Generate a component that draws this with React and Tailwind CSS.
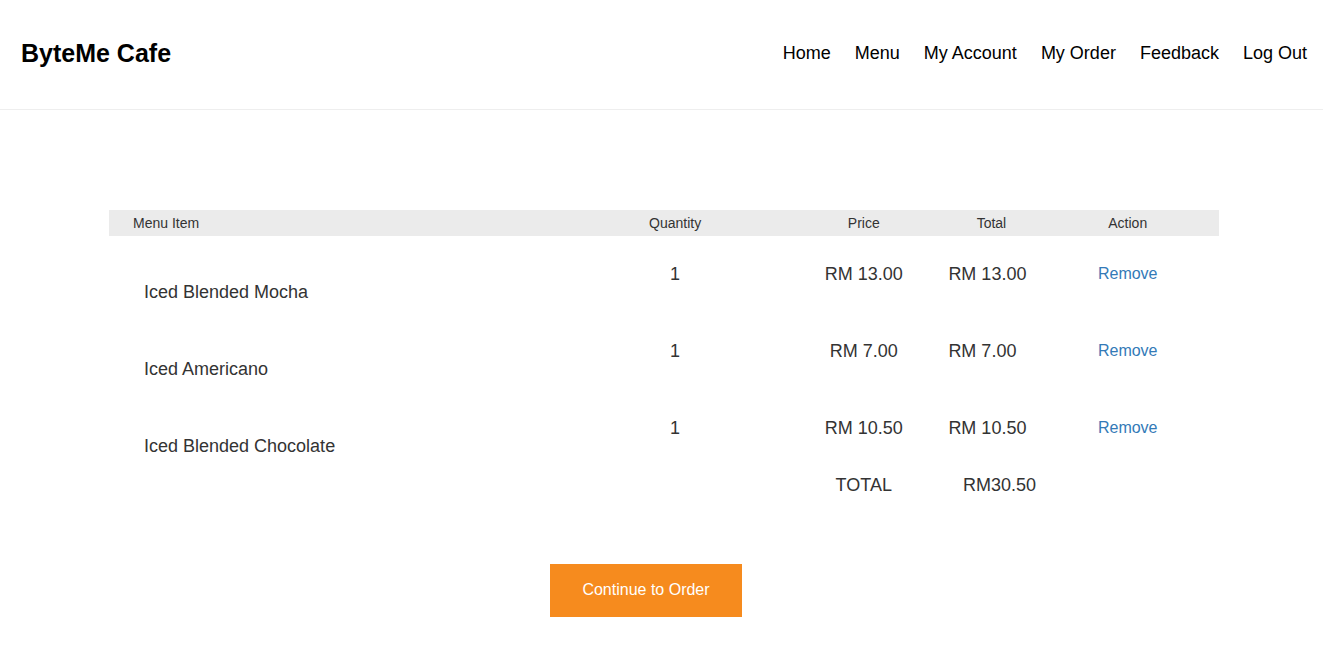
const links = ["Home", "Menu", "My Account", "My Order", "Feedback", "Log Out"];

const items = [
  { name: "Iced Blended Mocha", quantity: 1, price: "RM 13.00" },
  { name: "Iced Americano", quantity: 1, price: "RM 7.00" },
  { name: "Iced Blended Chocolate", quantity: 1, price: "RM 10.50" },
];

export default function App() {
  return (
    <div className="bg-white font-['Liberation_Sans',Arial,sans-serif] text-[#333333]">
      <header className="flex items-center justify-between border-b border-[#eeeeee] pt-8 pr-4 pb-[35px] pl-[21px] text-black">
        <a href="#home" className="text-[25px] leading-[42px] font-bold">
          ByteMe Cafe
        </a>
        <nav className="flex gap-6 text-lg">
          {links.map((link) => (
            <a key={link} href="#">
              {link}
            </a>
          ))}
        </nav>
      </header>
      <main className="pt-[100px] pr-[104px] pb-10 pl-[109px]">
        <table className="w-full table-fixed border-collapse text-lg leading-6">
          <colgroup>
            <col className="w-[40%]" />
            <col className="w-[22%]" />
            <col className="w-[12%]" />
            <col className="w-[11%]" />
            <col />
          </colgroup>
          <thead className="bg-[#ebebeb] text-sm">
            <tr className="h-[26px]">
              <th scope="col" className="pl-6 text-left font-normal">Menu Item</th>
              <th scope="col" className="font-normal">Quantity</th>
              <th scope="col" className="font-normal">Price</th>
              <th scope="col" className="font-normal">Total</th>
              <th scope="col" className="pr-4 font-normal">Action</th>
            </tr>
          </thead>
          <tbody>
            {items.map((item) => (
              <tr key={item.name} className="h-[77px] align-top">
                <td className="pt-11 pl-[35px]">{item.name}</td>
                <td className="pt-[26px] text-center">{item.quantity}</td>
                <td className="pt-[26px] text-center">{item.price}</td>
                <td className="pt-[26px] pl-[18px]">{item.price}</td>
                <td className="pt-[26px] pr-4 text-center text-base">
                  <a href="#" className="text-[#337ab7]">Remove</a>
                </td>
              </tr>
            ))}
            <tr>
              <td colSpan={2} />
              <td className="pt-1.5 text-center">TOTAL</td>
              <td className="pt-1.5 pl-4 text-center">RM30.50</td>
              <td />
            </tr>
          </tbody>
        </table>
        <div className="flex justify-center pt-[67px] pr-9">
          <button type="button" className="bg-[#f68b1e] px-8 pt-3.5 pb-[15px] text-base leading-6 text-white">
            Continue to Order
          </button>
        </div>
      </main>
    </div>
  );
}
